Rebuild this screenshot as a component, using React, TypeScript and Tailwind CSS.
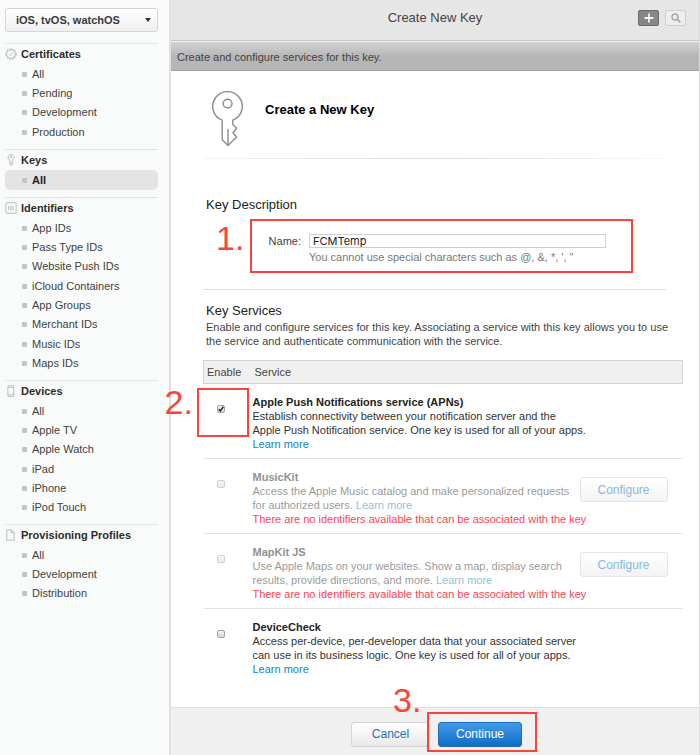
import React from "react";

type Section = { title: string; icon: React.ReactNode; items: string[]; active?: string };

const iconClass = "h-3 w-3 shrink-0 fill-none stroke-[#b4b6b5]";

const CertificateIcon = () => (
  <svg viewBox="0 0 12 12" className={iconClass} strokeWidth="0.8">
    <circle cx="6" cy="6" r="5.1" strokeWidth="1.1" strokeDasharray="1.8 0.87" />
    <circle cx="6" cy="6" r="4.3" />
    <path d="M4 6.1l1.5 1.5L8.2 4.6" />
  </svg>
);

const SmallKeyIcon = () => (
  <svg viewBox="0 0 12 12" className={iconClass} strokeWidth="0.9">
    <path d="M4.9 6.2a3 3 0 1 1 2.3 0v.9l.7.8-.6.7.6.8-.6.7-1.1 1.3-1.3-1.3z" />
    <circle cx="6" cy="2.9" r="0.9" />
    <path d="M6 8v3" />
  </svg>
);

const IdIcon = () => (
  <svg viewBox="0 0 12 12" className={iconClass} strokeWidth="0.9">
    <rect x="0.8" y="0.8" width="10.4" height="10.4" rx="0.8" />
    <path d="M3.7 4v4M5.7 4.4h1a1.6 1.6 0 0 1 0 3.3h-1z" />
  </svg>
);

const DeviceIcon = () => (
  <svg viewBox="0 0 12 12" className={iconClass} strokeWidth="0.9">
    <rect x="2.9" y="0.6" width="5.8" height="11" rx="0.9" />
    <path d="M2.9 2.3H8.7M2.9 9.8H8.7" />
  </svg>
);

const ProfileIcon = () => (
  <svg viewBox="0 0 12 12" className={iconClass} strokeWidth="0.9">
    <path d="M1.8 0.8h4.6l2.7 2.7v7.7H1.8zM6.3 0.8v2.8h2.8" />
  </svg>
);

const sections: Section[] = [
  { title: "Certificates", icon: <CertificateIcon />, items: ["All", "Pending", "Development", "Production"] },
  { title: "Keys", icon: <SmallKeyIcon />, items: ["All"], active: "All" },
  {
    title: "Identifiers",
    icon: <IdIcon />,
    items: ["App IDs", "Pass Type IDs", "Website Push IDs", "iCloud Containers", "App Groups", "Merchant IDs", "Music IDs", "Maps IDs"],
  },
  { title: "Devices", icon: <DeviceIcon />, items: ["All", "Apple TV", "Apple Watch", "iPad", "iPhone", "iPod Touch"] },
  { title: "Provisioning Profiles", icon: <ProfileIcon />, items: ["All", "Development", "Distribution"] },
];

function Sidebar() {
  return (
    <aside className="w-[171px] shrink-0 border-r-2 border-[#dfe1e0] bg-[#f9fbfa] pt-2 pr-[11px] pl-[5px]">
      <div className="relative mb-[11px]">
        <select
          aria-label="Platform"
          className="block h-6 w-full appearance-none rounded-[3px] border border-[#d5d6d6] bg-linear-to-b from-white to-[#efefef] pl-[10px] text-[11px] font-bold text-[#3a3a3a]"
        >
          <option>iOS, tvOS, watchOS</option>
        </select>
        <svg viewBox="0 0 6 4" className="pointer-events-none absolute top-[10px] right-[7px] h-1 w-[6px] fill-[#333]">
          <path d="M0 0h6L3 4z" />
        </svg>
      </div>
      {sections.map((s) => (
        <nav key={s.title} aria-label={s.title} className="border-t border-[#e3e5e4] pb-[7px]">
          <h2 className="flex h-5 items-center gap-1 text-[11px] font-bold text-[#2c2c2c]">
            {s.icon}
            {s.title}
          </h2>
          <ul>
            {s.items.map((item) => (
              <li key={item} className="h-[19px] nth-[3n+1]:h-5">
                <a
                  href="#"
                  className={
                    item === s.active
                      ? "flex h-full items-center gap-[5px] rounded-[5px] bg-[#e4e4e4] pl-[17px] text-[11px] font-bold text-[#222]"
                      : "flex h-full items-center gap-[5px] pl-[17px] text-[11px] text-[#3f3f3f]"
                  }
                >
                  <span className="h-[5px] w-[5px] rounded-[1px] bg-[#c3c4c4]" />
                  {item}
                </a>
              </li>
            ))}
          </ul>
        </nav>
      ))}
    </aside>
  );
}

type Service = {
  id: string;
  name: string;
  lines: string[];
  checked?: boolean;
  disabled?: boolean;
  inlineLink?: boolean;
};

const services: Service[] = [
  {
    id: "apns",
    name: "Apple Push Notifications service (APNs)",
    lines: [
      "Establish connectivity between your notification server and the",
      "Apple Push Notification service. One key is used for all of your apps.",
    ],
    checked: true,
  },
  {
    id: "musickit",
    name: "MusicKit",
    lines: ["Access the Apple Music catalog and make personalized requests", "for authorized users."],
    disabled: true,
    inlineLink: true,
  },
  {
    id: "mapkit",
    name: "MapKit JS",
    lines: ["Use Apple Maps on your websites. Show a map, display search", "results, provide directions, and more."],
    disabled: true,
    inlineLink: true,
  },
  {
    id: "devicecheck",
    name: "DeviceCheck",
    lines: [
      "Access per-device, per-developer data that your associated server",
      "can use in its business logic. One key is used for all of your apps.",
    ],
  },
];

function ServiceRow({ s }: { s: Service }) {
  return (
    <tr className="h-[75px] border-b border-[#e2e2e2] align-top last:border-0">
      <td className="relative w-[49px] pt-[21px] pl-[13px]">
        <span className="grid w-2">
          <input
            id={s.id}
            type="checkbox"
            defaultChecked={s.checked}
            disabled={s.disabled}
            className="peer col-start-1 row-start-1 h-2 w-2 appearance-none rounded-[2px] border border-[#a3a3a3] bg-linear-to-b from-[#f0f0f0] to-[#d8d8d8] disabled:opacity-50"
          />
          <svg
            viewBox="0 0 8 8"
            className="pointer-events-none col-start-1 row-start-1 hidden h-2 w-2 fill-none stroke-[#222] peer-checked:block"
            strokeWidth="1.5"
          >
            <path d="M1.8 4.2L3.4 5.9L6.4 1.6" />
          </svg>
        </span>
        {s.checked && (
          <>
            <span className="pointer-events-none absolute top-1 -left-[7px] h-[49px] w-[52px] border-2 border-[#fb4439]" />
            <span className="pointer-events-none absolute -top-px -left-[39px] text-[34px] leading-[38px] text-[#fb4439]">2.</span>
          </>
        )}
      </td>
      <td className="pt-[11px] text-[11px] leading-[14px] whitespace-nowrap text-[#333]">
        <div className={s.disabled ? "opacity-50" : ""}>
          <label htmlFor={s.id} className="block font-bold text-[#222]">
            {s.name}
          </label>
          <p>
            {s.lines[0]}
            <br />
            {s.lines[1]} {!s.inlineLink && <br />}
            <a href="#" className="text-[#0e82c4]">
              Learn more
            </a>
          </p>
        </div>
        {s.disabled && <p className="text-[#ff4452]">There are no identifiers available that can be associated with the key</p>}
      </td>
      <td className="w-[103px] pt-[18px]">
        {s.disabled && (
          <button
            type="button"
            disabled
            className="block h-[25px] w-[88px] rounded-[3px] border border-[#e6e6e6] bg-linear-to-b from-white to-[#f3f3f3] text-[12px] text-[#86b9e3]"
          >
            Configure
          </button>
        )}
      </td>
    </tr>
  );
}

export default function App() {
  return (
    <div className="flex min-h-screen bg-white font-['Liberation_Sans',Arial,sans-serif]">
      <Sidebar />
      <main className="flex min-w-0 flex-1 flex-col border-r border-[#dcdcdc]">
        <header className="grid h-[41px] grid-cols-[1fr_auto_1fr] items-center border-b border-[#c9c9c9] bg-[#e6e6e6] pb-1">
          <h1 className="col-start-2 text-[13px] text-[#444]">Create New Key</h1>
          <div className="flex justify-end gap-[6px] pr-[13px]">
            <button
              type="button"
              aria-label="Add"
              className="flex h-4 w-[21px] items-center justify-center rounded-[2px] border border-[#6a6a6a] bg-[#868686]"
            >
              <svg viewBox="0 0 10 10" className="h-[10px] w-[10px] stroke-[#f2f2f2]" strokeWidth="1.8">
                <path d="M5 .5v9M.5 5h9" />
              </svg>
            </button>
            <button
              type="button"
              aria-label="Search"
              className="flex h-4 w-[21px] items-center justify-center rounded-[2px] border border-[#cfcfcf] bg-[#eeeeee]"
            >
              <svg viewBox="0 0 10 10" className="h-[10px] w-[10px] fill-none stroke-[#a8a8a8]" strokeWidth="1.4">
                <circle cx="4" cy="4" r="3" />
                <path d="M6.2 6.2L9.3 9.3" strokeWidth="1.8" />
              </svg>
            </button>
          </div>
        </header>
        <p className="h-[30px] border-y border-t-[#eeeeee] border-b-[#a4a4a4] bg-linear-to-b from-[#d4d4d4] to-[#b6b6b6] to-50% pl-[6px] text-[11px] leading-[30px] text-[#444]">
          Create and configure services for this key.
        </p>

        <section className="flex flex-col pt-5 pr-4 pl-8">
          <div className="flex h-[67px] gap-[22px] pl-[9px]">
            <svg viewBox="0 0 31 56" className="h-14 w-[31px] fill-none stroke-[#8c8c8c]" strokeWidth="1.4">
              <path d="M10.2 29.2A14.8 14.8 0 1 1 20.8 29.2V33.4L24.6 37.2L21 41.8L24.6 46L16 54.6L10.2 48.8Z" />
              <circle cx="15.6" cy="12.6" r="4.4" />
              <path d="M16 38v16" />
            </svg>
            <h2 className="h-10 text-[13px] leading-[38px] font-bold text-black">Create a New Key</h2>
          </div>
          <div className="mr-[17px] h-px bg-linear-to-r from-[#f4f4f4] via-[#dadada] to-[#f8f8f8]" />

          <form className="mr-[17px] border-b border-[#dedede] pt-[37px] pb-4 pl-[3px]">
            <h2 className="text-[13px] leading-[18px] text-[#222]">Key Description</h2>
            <div className="relative mt-[5px] mr-[33px] ml-11 grid h-[54px] grid-cols-[49px_1fr] content-start gap-x-2 border-2 border-[#fb4439] pt-[13px] pr-[25px]">
              <label htmlFor="name" className="text-right text-[11px] leading-[14px] text-[#444]">
                Name:
              </label>
              <input
                id="name"
                defaultValue="FCMTemp"
                className="h-[14px] w-full min-w-0 border border-[#cfcfcf] bg-white px-[3px] font-['Inter',sans-serif] text-[11px] leading-[12px] text-[#222]"
              />
              <p className="col-start-2 text-[11px] leading-[18px] text-[#777]">
                You cannot use special characters such as @, &amp;, *, ', "
              </p>
              <span className="pointer-events-none absolute -top-[2px] -left-[36px] text-[34px] leading-[38px] text-[#fb4439]">1.</span>
            </div>
          </form>

          <h2 className="mt-3 pl-[3px] text-[13px] leading-[18px] text-[#222]">Key Services</h2>
          <p className="mb-3 pl-[3px] text-[11px] leading-[14px] text-[#444]">
            Enable and configure services for this key. Associating a service with this key allows you to use the service
            and authenticate communication with the service.
          </p>

          <table className="w-full table-fixed border-collapse">
            <thead>
              <tr className="h-[23px] border border-[#d4d4d4] bg-[#f0f0f0] text-left text-[11px] text-[#444]">
                <th className="w-[49px] pl-[3px] font-normal">Enable</th>
                <th className="pl-[2px] font-normal">Service</th>
                <th className="w-[103px]" />
              </tr>
            </thead>
            <tbody>
              {services.map((s) => (
                <ServiceRow key={s.id} s={s} />
              ))}
            </tbody>
          </table>
        </section>

        <footer className="mt-[23px] flex flex-1 items-start justify-center gap-2 border-t border-[#dcdcdc] bg-[#f0f0f0] pt-[14px] pb-2 pl-[3px]">
          <button
            type="button"
            className="h-[25px] w-[79px] rounded-[3px] border border-[#d3d3d3] bg-linear-to-b from-white to-[#e9e9e9] text-[12px] text-[#1673c4]"
          >
            Cancel
          </button>
          <div className="relative">
            <button
              type="button"
              className="block h-[25px] w-[84px] rounded-[3px] border border-[#1a6fc0] bg-linear-to-b from-[#409ce8] to-[#0f6bc4] text-[12px] text-white"
            >
              Continue
            </button>
            <span className="pointer-events-none absolute -top-[10px] -left-[11px] h-10 w-[110px] border-2 border-[#fb4439]" />
            <span className="pointer-events-none absolute -top-[41px] -left-[45px] text-[34px] leading-[38px] text-[#fb4439]">3.</span>
          </div>
        </footer>
      </main>
    </div>
  );
}
